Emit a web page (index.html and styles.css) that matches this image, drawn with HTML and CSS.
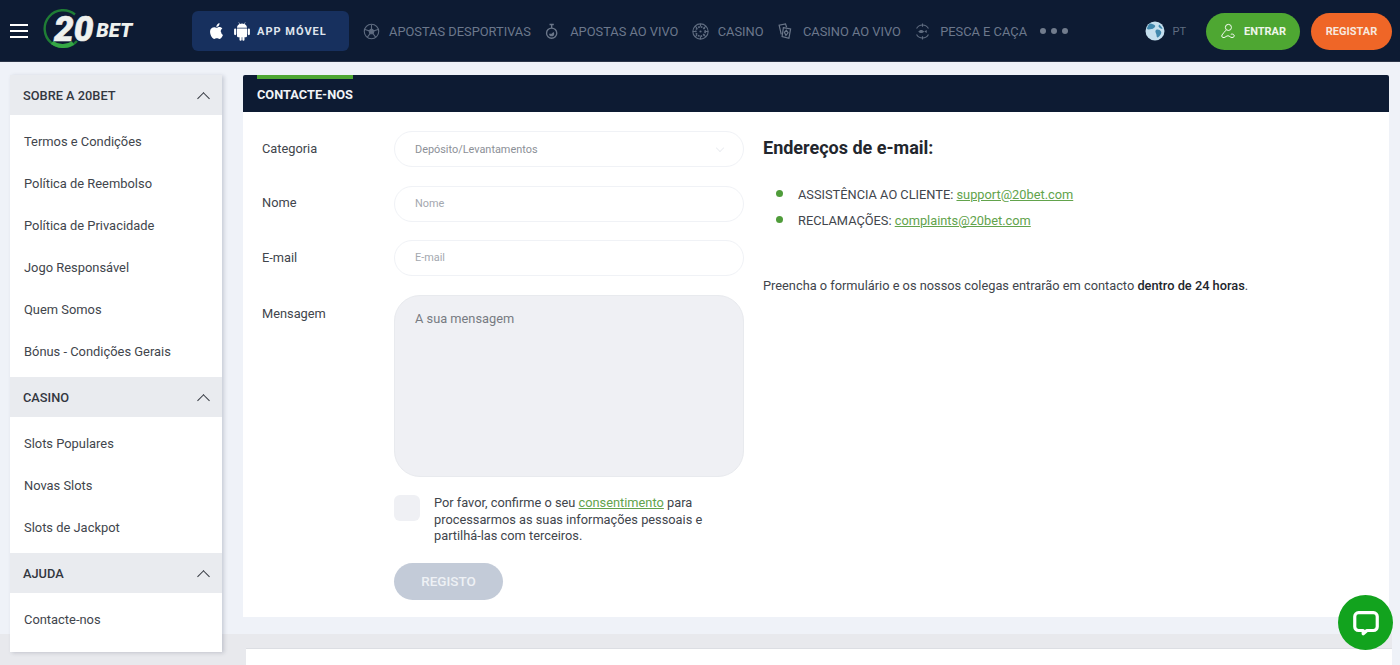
FILE: index.html
```html
<!DOCTYPE html>
<html lang="pt">
<head>
    <meta charset="UTF-8">
    <meta name="viewport" content="width=device-width, initial-scale=1.0">
    <title>Contacte-nos</title>
    <link rel="stylesheet" href="styles.css">
</head>
<body>
    <header class="topbar">
        <div class="burger"><span></span><span></span><span></span></div>
        <div class="logo">
            <svg class="logo-ring" viewBox="0 0 40 40" fill="none">
                <path d="M32 6.500A18.500 18.500 0 1 0 34 33" stroke="#1f7d35" stroke-width="2.400"/>
                <path d="M9 34.500A18.500 18.500 0 0 0 30 35" stroke="#35a845" stroke-width="4"/>
            </svg>
            <span class="logo-num">20</span>
            <span class="logo-bet">BET</span>
        </div>
        <a class="app-btn">
            <svg class="app-icon" viewBox="0 0 24 24" fill="#fff">
                <path d="M17.6 12.6c0-2.3 1.9-3.4 2-3.5-1.1-1.6-2.8-1.8-3.4-1.8-1.4-.1-2.8.9-3.5.9s-1.9-.9-3.1-.8c-1.6 0-3.1.9-3.9 2.3-1.7 2.9-.4 7.2 1.2 9.500.8 1.100 1.800 2.400 3 2.400s1.700-.8 3.100-.8 1.900.8 3.200.8 2.100-1.100 2.900-2.300c.9-1.300 1.300-2.600 1.300-2.700-.1 0-2.300-.9-2.300-3.500zM15.300 5.700c.6-.8 1.100-1.900 1-3-1 0-2.100.6-2.800 1.500-.6.7-1.100 1.800-1 2.900 1.100.1 2.200-.6 2.800-1.400z"/>
            </svg>
            <svg class="app-icon" viewBox="0 0 24 24" fill="#fff">
                <path d="M6 9h12v9a1.500 1.500 0 0 1-1.500 1.500H15V22.500a1.300 1.300 0 0 1-2.600 0V19.500h-.8V22.500a1.300 1.300 0 0 1-2.600 0V19.500H7.500A1.500 1.500 0 0 1 6 18zM3.800 9a1.300 1.300 0 0 1 1.300 1.300v5.400a1.300 1.300 0 0 1-2.600 0v-5.400A1.300 1.300 0 0 1 3.800 9zm16.400 0a1.300 1.300 0 0 1 1.300 1.300v5.400a1.300 1.300 0 0 1-2.600 0v-5.400A1.300 1.300 0 0 1 20.200 9zM6 8.200c.1-2 1.200-3.600 2.900-4.500L7.800 1.800l.5-.3 1.200 2a7 7 0 0 1 5 0l1.200-2 .5.3-1.100 1.900c1.700.9 2.800 2.500 2.900 4.500z"/>
            </svg>
            <span>APP MÓVEL</span>
        </a>
        <nav class="main-nav">
            <a class="nav-item">
                <svg class="nav-icon" viewBox="0 0 20 20" fill="none" stroke="#5f6c80" stroke-width="1.300">
                    <circle cx="10" cy="10" r="8.500"/>
                    <path d="M10 7l3 2.200-1.100 3.400H8.100L7 9.200z" fill="#5f6c80"/>
                    <path d="M10 2v5M13 9.200l4.800-1.500M11.900 12.600l2.900 4M8.100 12.600l-2.900 4M7 9.200L2.200 7.700"/>
                </svg>
                <span>APOSTAS DESPORTIVAS</span>
            </a>
            <a class="nav-item">
                <svg class="nav-icon" viewBox="0 0 20 20" fill="none" stroke="#6b778a" stroke-width="1.600">
                    <circle cx="9" cy="12" r="6"/>
                    <path d="M6.500 1.800h5M9 1.800V6"/>
                    <path d="M6 12.500a3 3 0 0 0 6 0c0-1-.5-1.500-1-2l-2 2z" fill="#6b778a" stroke="none"/>
                </svg>
                <span>APOSTAS AO VIVO</span>
            </a>
            <a class="nav-item">
                <svg class="nav-icon" viewBox="0 0 20 20" fill="none" stroke="#5f6c80" stroke-width="1.300">
                    <circle cx="10" cy="10" r="9"/>
                    <circle cx="10" cy="10" r="5.500" stroke-dasharray="2 1.200" stroke-width="2"/>
                    <path d="M10 1v3M10 16v3M1 10h3M16 10h3M3.600 3.600l2.200 2.200M14.200 14.200l2.200 2.200M16.400 3.600l-2.200 2.200M5.800 14.200l-2.200 2.200"/>
                    <circle cx="10" cy="10" r="1.300" fill="#5f6c80" stroke="none"/>
                </svg>
                <span>CASINO</span>
            </a>
            <a class="nav-item">
                <svg class="nav-icon" viewBox="0 0 20 20" fill="none" stroke="#6b778a" stroke-width="1.400">
                    <path d="M5 13.500L2.500 2.500 10 1l1.300 4"/>
                    <path d="M7.500 5.500l8.500 1.500-2 11-8-2z"/>
                    <path d="M11 8.500l2 3-2.500 3-1.800-3.500z"/>
                </svg>
                <span>CASINO AO VIVO</span>
            </a>
            <a class="nav-item">
                <svg class="nav-icon" viewBox="0 0 20 20" fill="none" stroke="#5f6c80" stroke-width="1.300">
                    <path d="M3 6.500A8 8 0 0 1 17 6.500M3 13.500A8 8 0 0 0 17 13.500"/>
                    <path d="M10 .5v4M10 15.500v4"/>
                    <path d="M5 10c2-2.500 5-2.500 7 0-2 2.500-5 2.500-7 0zM12 10l3-1.800v3.600z" fill="#5f6c80" stroke="none"/>
                </svg>
                <span>PESCA E CAÇA</span>
            </a>
            <div class="nav-more"><span></span><span></span><span></span></div>
        </nav>
        <div class="lang">
            <svg class="globe" viewBox="0 0 20 20">
                <circle cx="10" cy="10" r="9.500" fill="#c4dfee"/>
                <path d="M5 2.500c2 .5 4 .5 5 2S8 8 6.500 8 3.500 9 2 8c0-2 1.500-4.500 3-5.500zM11 9c2-1 4 0 5 1.500s-1 4.500-3 6c-1 .5-1.500-1-1.500-2.500S9.500 10.500 11 9zM14 3.500c1.500 1 3 2.500 3.500 4.500-1.500 0-3-1-4-2.500z" fill="#3f87ac"/>
            </svg>
            <span>PT</span>
        </div>
        <a class="btn-login">
            <svg class="login-icon" viewBox="0 0 20 20" fill="none" stroke="#fff" stroke-width="1.200">
                <circle cx="10.500" cy="5.500" r="3.800"/>
                <path d="M7.500 9C6 11 4 12.500 2.500 15c-1 2 .5 3.500 2.500 3.200 2-.4 3-2.200 5-2.200s2.500 2 5 2.200c2.200 0 3.500-1.700 2.500-3.200-.7-1.200-2.500-1.500-4-.8"/>
            </svg>
            <span>ENTRAR</span>
        </a>
        <a class="btn-register">REGISTAR</a>
    </header>

    <div class="page">
        <aside class="sidebar">
            <div class="side-head"><span>SOBRE A 20BET</span><i class="chevron"></i></div>
            <ul class="side-list">
                <li>Termos e Condições</li>
                <li>Política de Reembolso</li>
                <li>Política de Privacidade</li>
                <li>Jogo Responsável</li>
                <li>Quem Somos</li>
                <li>Bónus - Condições Gerais</li>
            </ul>
            <div class="side-head"><span>CASINO</span><i class="chevron"></i></div>
            <ul class="side-list">
                <li>Slots Populares</li>
                <li>Novas Slots</li>
                <li>Slots de Jackpot</li>
            </ul>
            <div class="side-head"><span>AJUDA</span><i class="chevron"></i></div>
            <ul class="side-list">
                <li>Contacte-nos</li>
            </ul>
        </aside>

        <main class="content">
            <div class="content-title"><span>CONTACTE-NOS</span></div>
            <div class="content-body">
                <form class="contact-form">
                    <div class="form-row">
                        <label>Categoria</label>
                        <div class="field field-select">Depósito/Levantamentos</div>
                    </div>
                    <div class="form-row">
                        <label>Nome</label>
                        <div class="field">Nome</div>
                    </div>
                    <div class="form-row">
                        <label>E-mail</label>
                        <div class="field">E-mail</div>
                    </div>
                    <div class="form-row form-row-top">
                        <label>Mensagem</label>
                        <div class="field-area">A sua mensagem</div>
                    </div>
                    <div class="consent">
                        <div class="checkbox"></div>
                        <p>Por favor, confirme o seu <a>consentimento</a> para processarmos as suas informações pessoais e partilhá-las com terceiros.</p>
                    </div>
                    <div class="submit">REGISTO</div>
                </form>
                <section class="contact-info">
                    <h2>Endereços de e-mail:</h2>
                    <ul class="mail-list">
                        <li>ASSISTÊNCIA AO CLIENTE: <a>support@20bet.com</a></li>
                        <li>RECLAMAÇÕES: <a>complaints@20bet.com</a></li>
                    </ul>
                    <p>Preencha o formulário e os nossos colegas entrarão em contacto <b>dentro de 24 horas</b>.</p>
                </section>
            </div>
        </main>
    </div>

    <div class="footer-band"><div class="footer-card"></div></div>

    <div class="chat-btn">
        <svg viewBox="0 0 32 32" fill="none">
            <path d="M8 5h16a4 4 0 0 1 4 4v11a4 4 0 0 1-4 4h-7l-4 3.500V24H8a4 4 0 0 1-4-4V9a4 4 0 0 1 4-4z" stroke="#fff" stroke-width="3.400" stroke-linejoin="round"/>
        </svg>
    </div>
</body>
</html>
```

FILE: styles.css
```css
html, body {
    height: 100%;
    margin: 0;
    padding: 0;
    overflow: hidden;
    font-family: Roboto, "Liberation Sans", sans-serif;
    background-color: #eff2f8;
}
.topbar {
    display: flex;
    align-items: center;
    height: 62px;
    padding-top: 1px;
    background-color: #0d1b33;
    border-bottom: 1px solid #2b3548;
    box-sizing: border-box;
}
.burger {
    display: flex;
    flex-direction: column;
    gap: 4px;
    width: 18px;
    margin-left: 10px;
}
.burger span {
    height: 2px;
    background-color: #fff;
}
.logo {
    position: relative;
    display: flex;
    align-items: center;
    width: 92px;
    height: 44px;
    margin-left: 15px;
    margin-bottom: 3px;
}
.logo-ring {
    position: absolute;
    left: 0;
    top: 0;
    width: 40px;
    height: 40px;
}
.logo-num {
    position: relative;
    margin-left: 11px;
    font-size: 35px;
    font-weight: 900;
    font-style: italic;
    color: #eef1ee;
    -webkit-text-stroke: 0.6px #eef1ee;
}
.logo-bet {
    position: relative;
    margin-left: 3px;
    font-size: 20px;
    font-weight: 900;
    font-style: italic;
    color: #eef1ee;
}
.app-btn {
    display: flex;
    align-items: center;
    width: 157px;
    height: 40px;
    margin-left: 57px;
    padding-left: 14px;
    box-sizing: border-box;
    background-color: #17305e;
    border-radius: 6px;
    color: #dfe4ec;
    font-size: 11px;
    font-weight: 700;
    letter-spacing: 1px;
}
.app-icon {
    width: 20px;
    height: 20px;
    margin-right: 5.500px;
}
.main-nav {
    display: flex;
    align-items: center;
    margin-left: 14px;
}
.nav-item {
    display: flex;
    align-items: center;
    gap: 9px;
    margin-right: 13.300px;
    font-size: 12.850px;
    color: #6c788c;
}
.nav-icon {
    width: 17px;
    height: 17px;
}
.nav-more {
    display: flex;
    gap: 5px;
}
.nav-more span {
    width: 6px;
    height: 6px;
    border-radius: 50%;
    background-color: #717c8d;
}
.lang {
    display: flex;
    align-items: center;
    gap: 7px;
    margin-left: auto;
    font-size: 11px;
    color: #5f6c80;
}
.globe {
    width: 20px;
    height: 20px;
}
.btn-login {
    display: flex;
    align-items: center;
    justify-content: center;
    gap: 8px;
    width: 94px;
    height: 37px;
    margin-left: 20px;
    background-color: #4ea732;
    border-radius: 19px;
    color: #eef6ea;
    font-size: 11px;
    font-weight: 700;
}
.login-icon {
    width: 16px;
    height: 16px;
}
.btn-register {
    display: flex;
    align-items: center;
    justify-content: center;
    width: 81px;
    height: 37px;
    margin-left: 11px;
    margin-right: 8px;
    background-color: #ef6627;
    border-radius: 19px;
    color: #f7e8df;
    font-size: 11px;
    font-weight: 700;
}
.page {
    display: flex;
    align-items: flex-start;
    height: 572px;
    padding: 13px 11px 0 10px;
    box-sizing: border-box;
}
.sidebar {
    position: relative;
    z-index: 1;
    flex-shrink: 0;
    width: 212px;
    height: 577px;
    margin-right: 21px;
    background-color: #fff;
    box-shadow: 2px 1px 4px rgba(60, 70, 90, 0.22);
}
.side-head {
    display: flex;
    align-items: center;
    justify-content: space-between;
    height: 40px;
    padding: 0 13px;
    background-color: #e9ebef;
    font-size: 12.800px;
    font-weight: 500;
    color: #33373f;
}
.chevron {
    width: 8px;
    height: 8px;
    margin: 7px 1px 0 0;
    border-left: 1.700px solid #33373f;
    border-top: 1.700px solid #33373f;
    transform: rotate(45deg);
}
.side-list {
    list-style: none;
    margin: 0;
    padding: 6px 0 4px;
}
.side-list li {
    height: 42px;
    padding-left: 14px;
    line-height: 42px;
    font-size: 12.900px;
    color: #41454c;
}
.content {
    flex-grow: 1;
}
.content-title {
    height: 37px;
    background-color: #0d1b33;
    border-radius: 2px 2px 0 0;
}
.content-title span {
    display: inline-block;
    height: 33px;
    margin-left: 14px;
    border-top: 4px solid #4ea732;
    line-height: 32px;
    font-size: 12.800px;
    font-weight: 700;
    color: #f2f4f7;
}
.content-body {
    display: flex;
    height: 505px;
    background-color: #fff;
    box-sizing: border-box;
}
.contact-form {
    width: 502px;
    padding: 19px 0 0 19px;
    box-sizing: border-box;
}
.form-row {
    display: flex;
    align-items: center;
    margin-bottom: 18.500px;
}
.form-row-top {
    align-items: flex-start;
}
.form-row label {
    width: 132px;
    flex-shrink: 0;
    margin-top: -2px;
    font-size: 12.800px;
    color: #41454c;
}
.form-row-top label {
    margin-top: 0;
    padding-top: 11px;
}
.field {
    width: 350px;
    height: 36px;
    padding-left: 20px;
    box-sizing: border-box;
    border: 1px solid #f0f2f6;
    border-radius: 18px;
    line-height: 34px;
    font-size: 10.900px;
    color: #a4a8af;
}
.field-select {
    position: relative;
    line-height: 35px;
    color: #8c9097;
}
.field-select::after {
    content: "";
    position: absolute;
    right: 20px;
    top: 13px;
    width: 5px;
    height: 5px;
    border-right: 1px solid #eceef2;
    border-bottom: 1px solid #eceef2;
    transform: rotate(45deg);
}
.field-area {
    width: 350px;
    height: 182px;
    padding: 15px 20px;
    box-sizing: border-box;
    background-color: #eff0f4;
    border: 1px solid #e8eaee;
    border-radius: 26px;
    font-size: 12.800px;
    color: #777b82;
}
.consent {
    display: flex;
    margin-left: 132px;
}
.checkbox {
    flex-shrink: 0;
    width: 26px;
    height: 26px;
    margin-right: 14px;
    background-color: #eff0f4;
    border-radius: 6px;
}
.consent p {
    width: 290px;
    margin: 0;
    font-size: 12.800px;
    line-height: 16.500px;
    color: #41454c;
}
.consent a,
.mail-list a {
    color: #62a34c;
    text-decoration: underline;
}
.submit {
    width: 109px;
    height: 36.500px;
    margin: 18.500px 0 0 132px;
    background-color: #c3cbd8;
    border-radius: 19px;
    text-align: center;
    line-height: 36.500px;
    font-size: 13.500px;
    font-weight: 500;
    color: #eef1f5;
}
.contact-info {
    padding-top: 25px;
    padding-left: 18px;
    color: #41454c;
    font-size: 12.800px;
}
.contact-info h2 {
    margin: 0 0 23px;
    font-size: 18px;
    line-height: 22px;
    font-weight: 700;
    color: #22262d;
}
.mail-list {
    list-style: none;
    margin: 0 0 44px;
    padding: 0;
}
.mail-list li {
    position: relative;
    height: 25.500px;
    padding-left: 35px;
    line-height: 25.500px;
}
.mail-list li::before {
    content: "";
    position: absolute;
    left: 13px;
    top: 8px;
    width: 7px;
    height: 7px;
    border-radius: 50%;
    background-color: #4f9c3a;
}
.contact-info p {
    margin: 0;
    line-height: 17px;
}
.contact-info b {
    font-weight: 500;
    color: #22262d;
}
.footer-band {
    height: 31px;
    margin-right: 8px;
    padding-left: 246px;
    padding-top: 14px;
    background-color: #e8e9ed;
    box-sizing: border-box;
}
.footer-card {
    height: 100%;
    background-color: #fff;
    border-top: 1px solid #dcdee3;
}
.chat-btn {
    position: fixed;
    right: 7px;
    bottom: 15px;
    display: flex;
    align-items: center;
    justify-content: center;
    width: 55px;
    height: 55px;
    border-radius: 50%;
    background-color: #12a31e;
}
.chat-btn svg {
    width: 30px;
    height: 30px;
}
```
